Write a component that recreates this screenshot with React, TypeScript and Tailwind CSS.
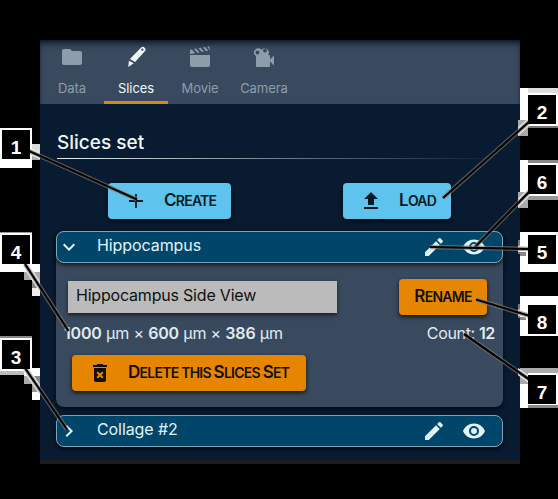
import React from "react";

const paths = {
  folder: "M10 4H4c-1.11 0-2 .89-2 2v12c0 1.1.9 2 2 2h16c1.1 0 2-.9 2-2V8c0-1.11-.9-2-2-2h-8l-2-2z",
  plus: "M19 12.9h-6.100V19h-1.800v-6.100H5v-1.800h6.100V5h1.800v6.100H19z",
  upload: "M9 16v-6H5l7-7 7 7h-4v6H9m-4 4v-2h14v2H5z",
  pencil: "M20.71 7.04c.39-.39.39-1.04 0-1.41l-2.34-2.34c-.37-.39-1.02-.39-1.41 0l-1.84 1.83 3.75 3.75M3 17.25V21h3.75L17.81 9.93l-3.75-3.75L3 17.25z",
  eye: "M12 9a3 3 0 0 0-3 3 3 3 0 0 0 3 3 3 3 0 0 0 3-3 3 3 0 0 0-3-3m0 8a5 5 0 0 1-5-5 5 5 0 0 1 5-5 5 5 0 0 1 5 5 5 5 0 0 1-5 5m0-12.5C7 4.500 2.730 7.610 1 12c1.730 4.390 6 7.500 11 7.500s9.270-3.110 11-7.500c-1.730-4.390-6-7.500-11-7.500z",
  down: "M7.41 8.58L12 13.17l4.59-4.59L18 10l-6 6-6-6 1.41-1.42z",
  right: "M8.59 16.58L13.17 12 8.59 7.41 10 6l6 6-6 6-1.41-1.42z",
  trash: "M6 19a2 2 0 0 0 2 2h8a2 2 0 0 0 2-2V7H6v12M8.460 11.880l1.410-1.410L12 12.590l2.120-2.120 1.410 1.410L13.410 14l2.120 2.120-1.410 1.410L12 15.410l-2.120 2.120-1.410-1.410L10.590 14l-2.130-2.120M15.500 4l-1-1h-5l-1 1H5v2h14V4h-3.500z",
  movie: "M2 10h20v10a2 2 0 0 1-2 2H4a2 2 0 0 1-2-2zM2 4.700L3.800 4.400 7.200 8.200 2 9.100zM6.100 4l2.100-.4 3.300 3.800-2.100.4zM10.500 3.200l2.100-.4 3.300 3.800-2.100.4zM14.900 2.400l2.100-.4 3.300 3.800-2.100.4zM19.200 1.700l2-.4.8 4.100z",
  camera: "M18 14.500V11a1 1 0 0 0-1-1h-1a4 4 0 1 0-6.500-5.200A4 4 0 1 0 3 10.500h1V21a1 1 0 0 0 1 1h12a1 1 0 0 0 1-1v-4.500l4 4v-10zM13 3.500a2 2 0 1 1 0 4 2 2 0 0 1 0-4M5.500 5.500a2 2 0 1 1 0 4 2 2 0 0 1 0-4",
};

function Icon({ name, className = "size-6" }: { name: keyof typeof paths; className?: string }) {
  return (
    <svg viewBox="0 0 24 24" fill="currentColor" fillRule="evenodd" className={"shrink-0 " + className}>
      <path d={paths[name]} />
    </svg>
  );
}

function Scalpel() {
  return (
    <svg viewBox="0 0 24 24" fill="currentColor" fillRule="evenodd" className="size-6">
      <path d="M4.300 21.900l.6-6.200 4.900 2.500zM5.900 14L17 2.800a2.500 2.500 0 0 1 3.600 0 2.600 2.600 0 0 1 0 3.800L11.100 17zM18.300 3.500a1.100 1.100 0 1 0 .1 0" />
    </svg>
  );
}

// Capitalised words set with reduced-height capitals.
function Caps({ text }: { text: string }) {
  return (
    <span className="block pb-[2px] text-sm leading-5 font-semibold tracking-[-0.75px] whitespace-nowrap">
      {text.split(" ").map((w, i) => (
        <React.Fragment key={i}>
          {i > 0 && " "}
          {w[0] === w[0].toUpperCase() ? <span className="text-[17px]">{w[0]}</span> : w[0].toUpperCase()}
          {w.slice(1).toUpperCase()}
        </React.Fragment>
      ))}
    </span>
  );
}

function Tab({ label, active, children }: { label: string; active?: boolean; children: React.ReactNode }) {
  return (
    <div className={"flex h-16 w-16 flex-col items-center border-b-3 pt-[5px] " + (active ? "border-[#dc8519] text-[#f0f8fc]" : "border-transparent text-[#8e9dac]")}>
      {children}
      <span className="mt-[9px] text-[13px] leading-5 tracking-[-0.05px]">{label}</span>
    </div>
  );
}

function Row({ label, open }: { label: string; open?: boolean }) {
  return (
    <div className="flex h-8 items-center rounded-lg border border-[#7ba5b9] bg-[#00466a] text-[#e2f3fa] shadow-[0_2px_4px_#000a]">
      <Icon name={open ? "down" : "right"} className="size-6" />
      <span className="-mt-1 ml-4 grow text-base tracking-[-0.08px]">{label}</span>
      <Icon name="pencil" />
      <Icon name="eye" className="mr-4 ml-4 size-6" />
    </div>
  );
}

const lines = [
  [29, 151, 137, 199.5], [25, 264, 68.5, 331], [25, 368, 67, 429.5], [530, 121, 443, 198],
  [530, 191, 475, 247], [530, 249, 430, 247], [530, 316, 476, 299.5], [530, 380, 464, 334],
];

// Callout plates: the outer block, then the stepped shadow pieces beside it.
const plates: [number, number, number, number, string][] = [
  [0, 128, 32, 40, "#fff"], [32, 144, 8, 8, "#ddd"], [32, 152, 8, 8, "#aaa"],
  [0, 232, 32, 40, "#fff"], [0, 232, 32, 1, "#999"], [32, 264, 8, 8, "#fff"], [24, 272, 16, 8, "#aaa"], [32, 280, 8, 8, "#888"], [32, 288, 8, 8, "#eee"],
  [0, 336, 32, 2, "#888"], [0, 338, 32, 33, "#fff"], [0, 371, 24, 4, "#bbb"], [24, 368, 16, 8, "#fff"], [24, 376, 8, 8, "#aaa"], [32, 376, 8, 8, "#888"], [32, 384, 8, 8, "#999"], [32, 392, 8, 8, "#fff"],
  [520, 88, 8, 40, "#fff"], [528, 88, 30, 5, "#ddd"], [528, 93, 30, 33, "#fff"], [528, 126, 30, 2, "#777"], [518, 120, 10, 16, "#aaa"],
  [520, 160, 8, 40, "#fff"], [528, 160, 30, 3, "#888"], [528, 163, 30, 33, "#fff"], [528, 196, 30, 4, "#999"], [518, 192, 10, 16, "#aaa"],
  [520, 232, 38, 40, "#fff"], [518, 240, 2, 14, "#777"], [520, 252, 6, 4, "#888"],
  [520, 296, 38, 40, "#fff"], [518, 304, 2, 14, "#777"], [520, 317, 6, 3, "#888"],
  [520, 368, 38, 5, "#aaa"], [528, 373, 30, 32, "#fff"], [528, 405, 30, 3, "#888"], [520, 373, 8, 11, "#aaa"], [520, 384, 8, 24, "#fff"],
];

const badges = [
  { n: 1, pos: "left-[2px] top-[130px]" }, { n: 4, pos: "left-[2px] top-[235px]" },
  { n: 3, pos: "left-[2px] top-[340px]" }, { n: 2, pos: "left-[528px] top-[95px]" },
  { n: 6, pos: "left-[528px] top-[165px]" }, { n: 5, pos: "left-[528px] top-[235px]" },
  { n: 8, pos: "left-[528px] top-[305px]" }, { n: 7, pos: "left-[528px] top-[375px]" },
];

export default function App() {
  const button = "flex h-9 items-center rounded shadow-[0_2px_4px_#000b]";
  return (
    <div className="relative h-[499px] w-[558px] overflow-hidden bg-black pt-10 font-['Inter',sans-serif]">
      <main className="ml-10 h-[424px] w-[480px] border-b-4 border-[#1c1c1c] bg-[#081b30]">
        <nav className="flex h-16 bg-[#394a5e] shadow-[inset_0_5px_6px_-2px_#071524]">
          <Tab label="Data"><Icon name="folder" /></Tab>
          <Tab label="Slices" active><Scalpel /></Tab>
          <Tab label="Movie"><Icon name="movie" /></Tab>
          <Tab label="Camera"><Icon name="camera" /></Tab>
        </nav>
        <section className="pt-6 pr-[17px] pl-4">
          <h1 className="pl-px text-[19px] leading-[29px] font-medium text-[#edf8fd]">Slices set</h1>
          <div className="mt-px ml-px h-px bg-linear-to-r from-[#e9f1f5] to-[#081b30]" />
          <div className="mt-6 flex justify-between px-[52px]">
            <button className={button + " w-[123px] bg-[#5ec4ed] pl-4 text-[#071b26]"}>
              <Icon name="plus" /><span className="ml-4"><Caps text="Create" /></span>
            </button>
            <button className={button + " w-[108px] bg-[#5ec4ed] pl-4 text-[#071b26]"}>
              <Icon name="upload" /><span className="ml-4"><Caps text="Load" /></span>
            </button>
          </div>
          <div className="mt-3 h-44 rounded-lg bg-[#394a5e] shadow-[0_2px_4px_#000a]">
            <Row label="Hippocampus" open />
            <div className="flex items-center justify-between pt-4 pr-4 pl-3">
              <div className="h-8 w-[269px] bg-[#bbb] pl-2 text-base leading-[29px] tracking-[-0.2px] text-[#111] shadow-[0_2px_4px_#0009]">Hippocampus Side View</div>
              <button className={button + " w-[88px] justify-center bg-[#e68600] text-[#170e00]"}><Caps text="Rename" /></button>
            </div>
            <div className="flex justify-between px-2 pt-1.5 text-base leading-6 tracking-[-0.18px] text-[#e0eaf2]">
              <span className="whitespace-nowrap"><b className="font-semibold">1000</b> µm × <b className="font-semibold">600</b> µm × <b className="font-semibold">386</b> µm</span>
              <span className="tracking-[-0.35px]">Count: <b className="font-semibold">12</b></span>
            </div>
            <button className={button + " mt-2.5 ml-4 w-[234px] bg-[#e68600] pl-4 text-[#170e00]"}>
              <Icon name="trash" /><span className="ml-4"><Caps text="Delete this Slices Set" /></span>
            </button>
          </div>
          <div className="mt-2"><Row label="Collage #2" /></div>
        </section>
      </main>
      <svg className="pointer-events-none absolute inset-0" width="558" height="499">
        {plates.map(([x, y, w, h, c], i) => <rect key={i} x={x} y={y} width={w} height={h} fill={c} />)}
        <clipPath id="margins"><path d="M0 0H40V499H0zM518 0H558V499H518z" /></clipPath>
        {lines.map(([a, b, c, d], i) => (
          <g key={i} stroke="#fff">
            <path d={`M${a} ${b}L${c} ${d}`} strokeWidth="6" clipPath="url(#margins)" />
            <path d={`M${a} ${b}L${c} ${d}`} stroke="#85817b" strokeOpacity=".65" strokeWidth="4.5" />
            <path d={`M${a} ${b}L${c} ${d}`} stroke="#000" strokeWidth="2.2" />
          </g>
        ))}
      </svg>
      {badges.map(({ n, pos }) => (
        <div key={n} className={"absolute flex h-[29px] w-7 items-center justify-center bg-black pt-1.5 font-['Liberation_Sans',sans-serif] text-[19px] leading-none font-bold text-white " + pos}>{n}</div>
      ))}
    </div>
  );
}
